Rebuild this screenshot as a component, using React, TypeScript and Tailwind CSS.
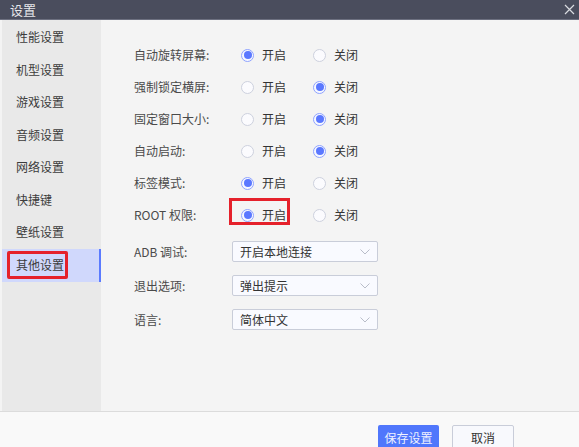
import React from 'react';

const menu = ['性能设置', '机型设置', '游戏设置', '音频设置', '网络设置', '快捷键', '壁纸设置', '其他设置'];

const radioRows: { label: string; on: boolean; mark?: boolean }[] = [
  { label: '自动旋转屏幕:', on: true },
  { label: '强制锁定横屏:', on: false },
  { label: '固定窗口大小:', on: false },
  { label: '自动启动:', on: false },
  { label: '标签模式:', on: true },
  { label: 'ROOT 权限:', on: true, mark: true },
];

const selects = [
  { label: 'ADB 调试:', value: '开启本地连接' },
  { label: '退出选项:', value: '弹出提示' },
  { label: '语言:', value: '简体中文' },
];

function Radio({ checked }: { checked: boolean }) {
  return checked ? (
    <span className="flex h-[13px] w-[13px] items-center justify-center rounded-full border border-[#8fa3ff] bg-[#f7f8ff]">
      <span className="h-[8px] w-[8px] rounded-full bg-[#5b78ff]" />
    </span>
  ) : (
    <span className="h-[13px] w-[13px] rounded-full border border-[#cdd1de] bg-[#fbfbfe]" />
  );
}

function Chevron() {
  return (
    <svg width="10" height="6" viewBox="0 0 10 6" fill="none">
      <path d="M0.5 0.5L5 5L9.5 0.5" stroke="#b9bdc9" strokeWidth="1" />
    </svg>
  );
}

export default function App() {
  return (
    <div
      className="flex h-[447px] w-[579px] flex-col overflow-hidden bg-[#f4f4f4] text-[12px] text-[#3c3c3c]"
      style={{ fontFamily: '"Noto Sans CJK SC", "Noto Sans", sans-serif' }}
    >
      {/* title bar */}
      <div className="flex h-[20px] shrink-0 items-center justify-between border-b border-[#6d7080] bg-[#4a4d5d] pl-[10px] pr-[4px]">
        <span className="text-[13px] leading-none text-[#e6e7ea]">设置</span>
        <svg width="11" height="11" viewBox="0 0 11 11" fill="none">
          <path d="M1 1L10 10M10 1L1 10" stroke="#d9dbe0" strokeWidth="1.2" />
        </svg>
      </div>

      <div className="flex min-h-0 flex-1 pl-[2px]">
        {/* sidebar */}
        <div className="flex w-[99px] shrink-0 flex-col bg-[#e9e9e9] pt-[1px]">
          {menu.map((m, i) => {
            const active = i === menu.length - 1;
            return (
              <div
                key={m}
                className={
                  active
                    ? 'flex h-[33px] items-center border-r-2 border-[#5b7bff] bg-[#d0d8fc] pl-[14px]'
                    : 'flex h-[32.5px] items-center pl-[14px]'
                }
              >
                {active ? (
                  <span className="relative">
                    <span className="absolute -left-[9px] -right-[4px] -top-[5px] -bottom-[5px] rounded-[2px] border-[3px] border-[#e5212b]" />
                    {m}
                  </span>
                ) : (
                  m
                )}
              </div>
            );
          })}
        </div>

        {/* content */}
        <div className="flex flex-1 flex-col pl-[33px] pt-[19px] text-[#4a4a4a]">
          {radioRows.map((r) => (
            <div key={r.label} className="flex h-[32px] items-center">
              <span className="w-[98px] shrink-0">{r.label}</span>
              <div className="flex items-center pl-[9px]">
                <label className="relative flex w-[72px] items-center gap-[8px]">
                  {r.mark && (
                    <span className="absolute -left-[12px] -top-[8px] h-[27px] w-[61px] border-[3px] border-[#e5212b]" />
                  )}
                  <Radio checked={r.on} />
                  <span className="text-[#333]">开启</span>
                </label>
                <label className="flex items-center gap-[8px]">
                  <Radio checked={!r.on} />
                  <span className="text-[#333]">关闭</span>
                </label>
              </div>
            </div>
          ))}

          <div className="mt-[10px] flex flex-col gap-[13px]">
            {selects.map((s) => (
              <div key={s.label} className="flex h-[21px] items-center">
                <span className="w-[98px] shrink-0">{s.label}</span>
                <div className="flex h-[21px] w-[146px] items-center justify-between rounded-[2px] border border-[#c9cdd9] bg-[#f9faff] pl-[7px] pr-[7px] text-[#333]">
                  <span>{s.value}</span>
                  <Chevron />
                </div>
              </div>
            ))}
          </div>
        </div>
      </div>

      {/* footer */}
      <div className="flex h-[36px] shrink-0 items-start justify-end gap-[13px] border-t border-[#dcdcdc] bg-[#f9f9f9] pr-[65px] pt-[13px]">
        <button className="h-[26px] w-[61px] rounded-[2px] bg-[#5077fc] text-[12px] text-[#eef1ff]">保存设置</button>
        <button className="h-[26px] w-[62px] rounded-[2px] border border-[#c9cdd9] bg-[#f8f9fd] text-[12px] text-[#333]">取消</button>
      </div>
    </div>
  );
}
